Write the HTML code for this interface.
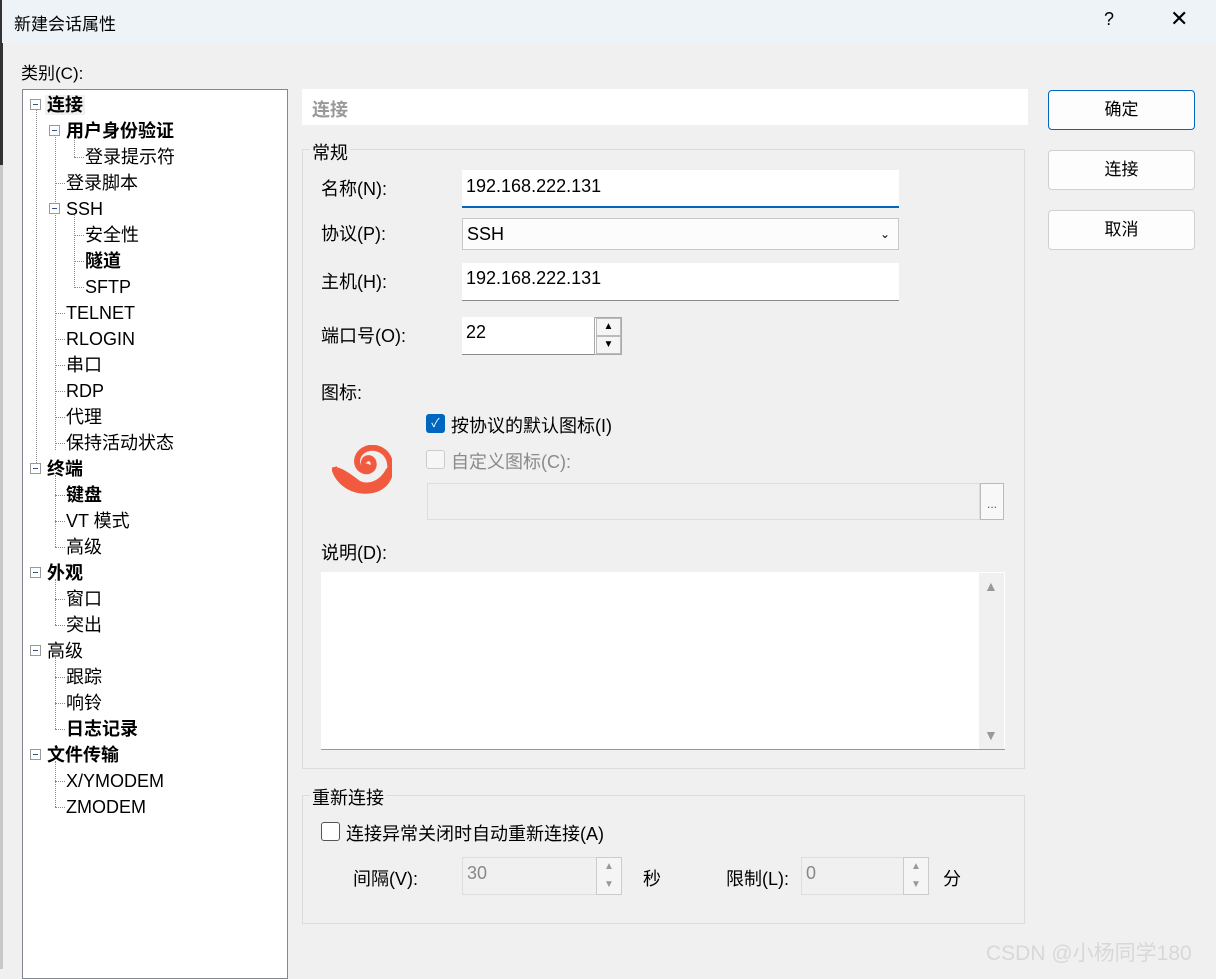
<!DOCTYPE html><html><head><meta charset="utf-8"><style>
*{margin:0;padding:0;box-sizing:border-box}
body{width:1216px;height:969px;background:#f0f0f0;font-family:"Liberation Sans","Noto Sans CJK SC",sans-serif;font-size:18px;color:#000;position:relative;overflow:hidden}
.a{position:absolute;white-space:nowrap}
.tb{left:2px;top:0;width:1214px;height:43px;background:#eef3f8}
.tree{left:22px;top:89px;width:266px;height:890px;background:#fff;border:1px solid #828790}
.ti{position:absolute;line-height:20px}
.b{font-weight:bold}
.exp{position:absolute;width:11px;height:11px;border:1px solid #999;background:#fff}
.exp:after{content:"";position:absolute;left:2px;top:4px;width:5px;height:1px;background:#33518c}
.vl{position:absolute;border-left:1px dotted #888;width:0}
.hl{position:absolute;border-top:1px dotted #888;height:0}
.btn{position:absolute;left:1048px;width:147px;height:40px;background:#fdfdfd;border:1px solid #d0d0d0;border-radius:4px;text-align:center;line-height:38px;font-size:17px}
.grp{position:absolute;border:1px solid #dcdcdc}
.inp{position:absolute;background:#fff;border-bottom:1px solid #8a8a8a;padding-left:4px;line-height:30px}
.spin{position:absolute;width:25px;height:18px;background:#f5f5f5;border:1px solid #bbb;font-size:10px;text-align:center;line-height:16px}
</style></head><body>
<div class="a" style="left:0;top:0;width:3px;height:165px;background:#333"></div>
<div class="a" style="left:0;top:165px;width:3px;height:804px;background:#c8c8c8"></div>
<div class="a tb"></div>
<div class="a" style="left:14px;top:10px;font-size:17px">新建会话属性</div>
<div class="a" style="left:1104px;top:9px;font-size:18px">?</div>
<div class="a" style="left:1170px;top:6px;font-size:22px;font-weight:300">✕</div>
<div class="a" style="left:21px;top:59px;font-size:17px">类别(C):</div>
<div class="a tree">
<div class="vl" style="left:13px;top:20px;height:353px"></div>
<div class="vl" style="left:32px;top:45px;height:315px"></div>
<div class="vl" style="left:51px;top:45px;height:22px"></div>
<div class="vl" style="left:51px;top:123px;height:75px"></div>
<div class="vl" style="left:32px;top:385px;height:72px"></div>
<div class="vl" style="left:32px;top:489px;height:46px"></div>
<div class="vl" style="left:32px;top:567px;height:72px"></div>
<div class="vl" style="left:32px;top:671px;height:46px"></div>
<div class="hl" style="left:51px;top:67px;width:10px"></div>
<div class="hl" style="left:32px;top:93px;width:10px"></div>
<div class="hl" style="left:51px;top:145px;width:10px"></div>
<div class="hl" style="left:51px;top:171px;width:10px"></div>
<div class="hl" style="left:51px;top:197px;width:10px"></div>
<div class="hl" style="left:32px;top:223px;width:10px"></div>
<div class="hl" style="left:32px;top:249px;width:10px"></div>
<div class="hl" style="left:32px;top:275px;width:10px"></div>
<div class="hl" style="left:32px;top:301px;width:10px"></div>
<div class="hl" style="left:32px;top:327px;width:10px"></div>
<div class="hl" style="left:32px;top:353px;width:10px"></div>
<div class="hl" style="left:32px;top:405px;width:10px"></div>
<div class="hl" style="left:32px;top:431px;width:10px"></div>
<div class="hl" style="left:32px;top:457px;width:10px"></div>
<div class="hl" style="left:32px;top:509px;width:10px"></div>
<div class="hl" style="left:32px;top:535px;width:10px"></div>
<div class="hl" style="left:32px;top:587px;width:10px"></div>
<div class="hl" style="left:32px;top:613px;width:10px"></div>
<div class="hl" style="left:32px;top:639px;width:10px"></div>
<div class="hl" style="left:32px;top:691px;width:10px"></div>
<div class="hl" style="left:32px;top:717px;width:10px"></div>
<div class="exp" style="left:7px;top:9px"></div>
<div class="exp" style="left:26px;top:35px"></div>
<div class="exp" style="left:26px;top:113px"></div>
<div class="exp" style="left:7px;top:373px"></div>
<div class="exp" style="left:7px;top:477px"></div>
<div class="exp" style="left:7px;top:555px"></div>
<div class="exp" style="left:7px;top:659px"></div>
<div class="ti b" style="left:22px;top:5px;background:#f0f0f0;padding:0 2px">连接</div>
<div class="ti b" style="left:43px;top:31px">用户身份验证</div>
<div class="ti" style="left:62px;top:57px">登录提示符</div>
<div class="ti" style="left:43px;top:83px">登录脚本</div>
<div class="ti" style="left:43px;top:109px">SSH</div>
<div class="ti" style="left:62px;top:135px">安全性</div>
<div class="ti b" style="left:62px;top:161px">隧道</div>
<div class="ti" style="left:62px;top:187px">SFTP</div>
<div class="ti" style="left:43px;top:213px">TELNET</div>
<div class="ti" style="left:43px;top:239px">RLOGIN</div>
<div class="ti" style="left:43px;top:265px">串口</div>
<div class="ti" style="left:43px;top:291px">RDP</div>
<div class="ti" style="left:43px;top:317px">代理</div>
<div class="ti" style="left:43px;top:343px">保持活动状态</div>
<div class="ti b" style="left:24px;top:369px">终端</div>
<div class="ti b" style="left:43px;top:395px">键盘</div>
<div class="ti" style="left:43px;top:421px">VT 模式</div>
<div class="ti" style="left:43px;top:447px">高级</div>
<div class="ti b" style="left:24px;top:473px">外观</div>
<div class="ti" style="left:43px;top:499px">窗口</div>
<div class="ti" style="left:43px;top:525px">突出</div>
<div class="ti" style="left:24px;top:551px">高级</div>
<div class="ti" style="left:43px;top:577px">跟踪</div>
<div class="ti" style="left:43px;top:603px">响铃</div>
<div class="ti b" style="left:43px;top:629px">日志记录</div>
<div class="ti b" style="left:24px;top:655px">文件传输</div>
<div class="ti" style="left:43px;top:681px">X/YMODEM</div>
<div class="ti" style="left:43px;top:707px">ZMODEM</div>
</div>

<div class="a" style="left:302px;top:89px;width:726px;height:36px;background:#fff"></div>
<div class="a b" style="left:312px;top:96px;color:#999">连接</div>

<div class="btn" style="top:90px;border:1px solid #0067c0">确定</div>
<div class="btn" style="top:150px">连接</div>
<div class="btn" style="top:210px">取消</div>

<div class="grp" style="left:302px;top:149px;width:723px;height:620px"></div>
<div class="a" style="left:310px;top:139px;background:#f0f0f0;padding:0 2px">常规</div>
<div class="a" style="left:321px;top:175px">名称(N):</div>
<div class="inp" style="left:462px;top:170px;width:437px;height:38px;border-bottom:2px solid #0067c0;line-height:32px">192.168.222.131</div>
<div class="a" style="left:321px;top:220px">协议(P):</div>
<div class="a" style="left:462px;top:218px;width:437px;height:32px;background:#fcfcfc;border:1px solid #c8c8c8;padding-left:4px;line-height:30px">SSH<span style="position:absolute;right:8px;top:0;font-size:12px">&#8964;</span></div>
<div class="a" style="left:321px;top:268px">主机(H):</div>
<div class="inp" style="left:462px;top:263px;width:437px;height:38px">192.168.222.131</div>
<div class="a" style="left:321px;top:322px">端口号(O):</div>
<div class="inp" style="left:462px;top:317px;width:132px;height:38px">22</div>
<div class="a" style="left:594px;top:317px;width:28px;height:38px;border:1px solid #aaa;background:#fff"></div>
<div class="spin" style="left:596px;top:318px">▲</div>
<div class="spin" style="left:596px;top:336px">▼</div>

<div class="a" style="left:321px;top:379px">图标:</div>
<div class="a" style="left:426px;top:414px;width:19px;height:19px;background:#0067c0;border-radius:3px;color:#fff;font-size:12px;text-align:center;line-height:19px">✓</div>
<div class="a" style="left:451px;top:412px">按协议的默认图标(I)</div>
<div class="a" style="left:426px;top:450px;width:19px;height:19px;background:#f6f6f6;border:1px solid #ccc;border-radius:3px"></div>
<div class="a" style="left:451px;top:448px;color:#8a8a8a">自定义图标(C):</div>
<svg class="a" style="left:332px;top:445px" width="60" height="50" viewBox="0 0 60 50">
<path d="M2 22 C6 40 26 50 44 44 C55 40 60 30 58 18 C56 6 44 0 34 4 C24 8 22 20 30 25 C37 29 44 23 41 16 C39 12 33 12 32 17 C31 20 35 22 36 19" fill="none" stroke="#f25a3f" stroke-width="6"/>
<path d="M2 22 C10 22 20 30 28 36 C36 40 48 36 54 24 L58 20 C58 36 46 48 30 48 C14 48 4 36 2 22Z" fill="#f25a3f"/>
</svg>
<div class="a" style="left:427px;top:483px;width:553px;height:37px;border:1px solid #ddd;background:#f0f0f0"></div>
<div class="a" style="left:980px;top:483px;width:24px;height:37px;border:1px solid #bbb;background:#f8f8f8;text-align:center;font-size:12px;line-height:40px;color:#555">...</div>
<div class="a" style="left:321px;top:539px">说明(D):</div>
<div class="a" style="left:321px;top:572px;width:684px;height:178px;background:#fff;border-bottom:1px solid #999"></div>
<div class="a" style="left:979px;top:573px;width:25px;height:176px;background:#f0f0f0"></div>
<div class="a" style="left:984px;top:578px;font-size:14px;color:#999">▲</div>
<div class="a" style="left:984px;top:727px;font-size:14px;color:#999">▼</div>

<div class="grp" style="left:302px;top:795px;width:723px;height:129px"></div>
<div class="a" style="left:310px;top:784px;background:#f0f0f0;padding:0 2px">重新连接</div>
<div class="a" style="left:321px;top:822px;width:19px;height:19px;background:#fff;border:1px solid #555;border-radius:3px"></div>
<div class="a" style="left:346px;top:820px">连接异常关闭时自动重新连接(A)</div>
<div class="a" style="left:353px;top:865px">间隔(V):</div>
<div class="a" style="left:462px;top:857px;width:160px;height:38px;background:#f0f0f0;border:1px solid #ddd;padding-left:4px;line-height:30px;color:#888">30</div>
<div class="a" style="left:596px;top:857px;width:26px;height:38px;border:1px solid #ccc;background:#f5f5f5;font-size:10px;color:#999;text-align:center;line-height:18px">▲<br>▼</div>
<div class="a" style="left:643px;top:865px">秒</div>
<div class="a" style="left:726px;top:865px">限制(L):</div>
<div class="a" style="left:801px;top:857px;width:128px;height:38px;background:#f0f0f0;border:1px solid #ddd;padding-left:4px;line-height:30px;color:#888">0</div>
<div class="a" style="left:903px;top:857px;width:26px;height:38px;border:1px solid #ccc;background:#f5f5f5;font-size:10px;color:#999;text-align:center;line-height:18px">▲<br>▼</div>
<div class="a" style="left:943px;top:865px">分</div>
<div class="a" style="left:986px;top:937px;font-size:21px;color:#d8d8d8">CSDN @小杨同学180</div>
</body></html>
